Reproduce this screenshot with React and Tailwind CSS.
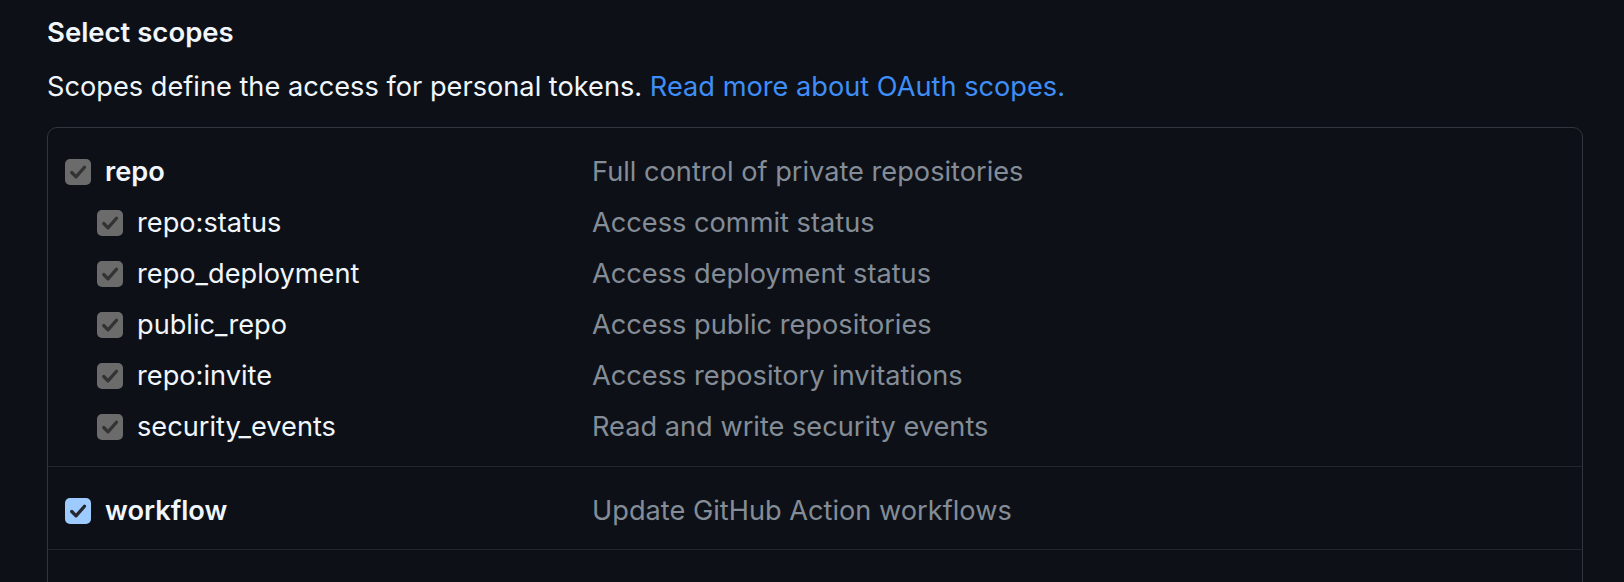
import React from "react";

const repoScopes = [
    {name: "repo:status", desc: "Access commit status"},
    {name: "repo_deployment", desc: "Access deployment status"},
    {name: "public_repo", desc: "Access public repositories"},
    {name: "repo:invite", desc: "Access repository invitations"},
    {name: "security_events", desc: "Read and write security events"},
];

function Check({active}) {
    return (
        <span className={"flex items-center justify-center w-[26px] h-[26px] rounded-[5px] shrink-0 " + (active ? "bg-[#9ecbff]" : "bg-[#6b6b6b]")}>
            <svg width="20" height="20" viewBox="0 0 16 16">
                <path d="M3 8.4 L6.4 11.9 L13.2 4.2" fill="none" stroke={active ? "#24272c" : "#333333"} strokeWidth="2.6" strokeLinecap="round" strokeLinejoin="round"/>
            </svg>
        </span>
    );
}

function Row({name, desc, bold, sub, active}) {
    return (
        <div className="flex items-center h-[51px]">
            <div className={"flex items-center w-[527px] " + (sub ? "pl-[32px]" : "")}>
                <Check active={active}/>
                <span className={"ml-[14px] text-[#f0f6fc] " + (bold ? "font-semibold" : "")}>{name}</span>
            </div>
            <span className="text-[#848d97]">{desc}</span>
        </div>
    );
}

export default function App() {
    return (
        <div className="min-h-screen bg-[#0d1117] pl-[47px] pr-[41px] pt-[14px] text-[27.2px] text-[#f0f6fc]" style={{fontFamily: "Inter, 'Liberation Sans', sans-serif"}}>
            <h3 className="font-semibold leading-[36px] text-[27.5px]">Select scopes</h3>
            <p className="mt-[19px] leading-[36px]">
                Scopes define the access for personal tokens. <a className="text-[#3f8ef7]">Read more about OAuth scopes.</a>
            </p>
            <div className="mt-[22px] border border-[#30363d] rounded-[10px]">
                <div className="pl-[17px] pt-[19px] pb-[13px]">
                    <Row name="repo" desc="Full control of private repositories" bold/>
                    {repoScopes.map(s => (
                        <Row key={s.name} name={s.name} desc={s.desc} sub/>
                    ))}
                </div>
                <div className="pl-[17px] pt-[19px] pb-[12px] border-t border-[#21262d]">
                    <Row name="workflow" desc="Update GitHub Action workflows" bold active/>
                </div>
                <div className="pl-[17px] pt-[20px] pb-[12px] border-t border-[#21262d]">
                    <Row name="write:packages" desc="Upload packages to GitHub Package Registry" bold/>
                </div>
            </div>
        </div>
    );
}
